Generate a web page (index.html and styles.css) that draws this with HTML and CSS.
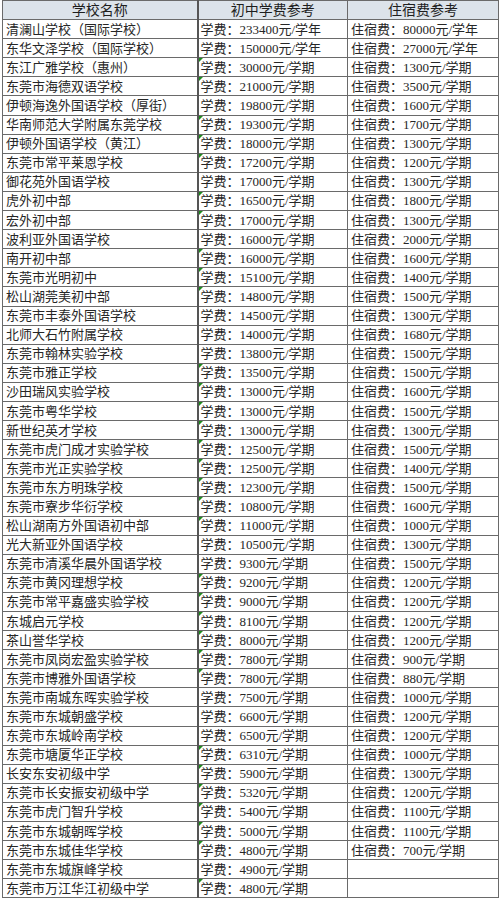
FILE: index.html
```html
<!DOCTYPE html>
<html lang="zh-CN">
<head>
<meta charset="utf-8">
<title>学校学费参考</title>
<link rel="stylesheet" href="styles.css">
</head>
<body>
<table class="fees">
<colgroup><col class="c1"><col class="c2"><col class="c3"></colgroup>
<thead>
<tr><th>学校名称</th><th>初中学费参考</th><th>住宿费参考</th></tr>
</thead>
<tbody>
<tr><td>清澜山学校（国际学校）</td><td>学费：233400元/学年</td><td>住宿费：80000元/学年</td></tr>
<tr><td>东华文泽学校（国际学校）</td><td>学费：150000元/学年</td><td>住宿费：27000元/学年</td></tr>
<tr><td>东江广雅学校（惠州）</td><td class="flag">学费：30000元/学期</td><td>住宿费：1300元/学期</td></tr>
<tr><td>东莞市海德双语学校</td><td class="flag">学费：21000元/学期</td><td>住宿费：3500元/学期</td></tr>
<tr><td>伊顿海逸外国语学校（厚街）</td><td>学费：19800元/学期</td><td>住宿费：1600元/学期</td></tr>
<tr><td>华南师范大学附属东莞学校</td><td class="flag">学费：19300元/学期</td><td>住宿费：1700元/学期</td></tr>
<tr><td>伊顿外国语学校（黄江）</td><td class="flag">学费：18000元/学期</td><td>住宿费：1300元/学期</td></tr>
<tr><td>东莞市常平莱恩学校</td><td class="flag">学费：17200元/学期</td><td>住宿费：1200元/学期</td></tr>
<tr><td>御花苑外国语学校</td><td>学费：17000元/学期</td><td>住宿费：1300元/学期</td></tr>
<tr><td>虎外初中部</td><td class="flag">学费：16500元/学期</td><td>住宿费：1800元/学期</td></tr>
<tr><td>宏外初中部</td><td class="flag">学费：17000元/学期</td><td>住宿费：1300元/学期</td></tr>
<tr><td>波利亚外国语学校</td><td>学费：16000元/学期</td><td>住宿费：2000元/学期</td></tr>
<tr><td>南开初中部</td><td class="flag">学费：16000元/学期</td><td>住宿费：1600元/学期</td></tr>
<tr><td>东莞市光明初中</td><td class="flag">学费：15100元/学期</td><td>住宿费：1400元/学期</td></tr>
<tr><td>松山湖莞美初中部</td><td class="flag">学费：14800元/学期</td><td>住宿费：1500元/学期</td></tr>
<tr><td>东莞市丰泰外国语学校</td><td>学费：14500元/学期</td><td>住宿费：1300元/学期</td></tr>
<tr><td>北师大石竹附属学校</td><td>学费：14000元/学期</td><td>住宿费：1680元/学期</td></tr>
<tr><td>东莞市翰林实验学校</td><td>学费：13800元/学期</td><td>住宿费：1500元/学期</td></tr>
<tr><td>东莞市雅正学校</td><td class="flag">学费：13500元/学期</td><td>住宿费：1500元/学期</td></tr>
<tr><td>沙田瑞风实验学校</td><td class="flag">学费：13000元/学期</td><td>住宿费：1600元/学期</td></tr>
<tr><td>东莞市粤华学校</td><td class="flag">学费：13000元/学期</td><td>住宿费：1500元/学期</td></tr>
<tr><td>新世纪英才学校</td><td class="flag">学费：13000元/学期</td><td>住宿费：1300元/学期</td></tr>
<tr><td>东莞市虎门成才实验学校</td><td class="flag">学费：12500元/学期</td><td>住宿费：1500元/学期</td></tr>
<tr><td>东莞市光正实验学校</td><td class="flag">学费：12500元/学期</td><td>住宿费：1400元/学期</td></tr>
<tr><td>东莞市东方明珠学校</td><td class="flag">学费：12300元/学期</td><td>住宿费：1500元/学期</td></tr>
<tr><td>东莞市寮步华衍学校</td><td class="flag">学费：10800元/学期</td><td>住宿费：1600元/学期</td></tr>
<tr><td>松山湖南方外国语初中部</td><td class="flag">学费：11000元/学期</td><td>住宿费：1000元/学期</td></tr>
<tr><td>光大新亚外国语学校</td><td>学费：10500元/学期</td><td>住宿费：1300元/学期</td></tr>
<tr><td>东莞市清溪华晨外国语学校</td><td>学费：9300元/学期</td><td>住宿费：1500元/学期</td></tr>
<tr><td>东莞市黄冈理想学校</td><td class="flag">学费：9200元/学期</td><td>住宿费：1200元/学期</td></tr>
<tr><td>东莞市常平嘉盛实验学校</td><td class="flag">学费：9000元/学期</td><td>住宿费：1200元/学期</td></tr>
<tr><td>东城启元学校</td><td class="flag">学费：8100元/学期</td><td>住宿费：1200元/学期</td></tr>
<tr><td>茶山誉华学校</td><td class="flag">学费：8000元/学期</td><td>住宿费：1200元/学期</td></tr>
<tr><td>东莞市凤岗宏盈实验学校</td><td class="flag">学费：7800元/学期</td><td>住宿费：900元/学期</td></tr>
<tr><td>东莞市博雅外国语学校</td><td class="flag">学费：7800元/学期</td><td>住宿费：880元/学期</td></tr>
<tr><td>东莞市南城东晖实验学校</td><td>学费：7500元/学期</td><td>住宿费：1000元/学期</td></tr>
<tr><td>东莞市东城朝盛学校</td><td>学费：6600元/学期</td><td>住宿费：1200元/学期</td></tr>
<tr><td>东莞市东城岭南学校</td><td>学费：6500元/学期</td><td>住宿费：1200元/学期</td></tr>
<tr><td>东莞市塘厦华正学校</td><td class="flag">学费：6310元/学期</td><td>住宿费：1000元/学期</td></tr>
<tr><td>长安东安初级中学</td><td class="flag">学费：5900元/学期</td><td>住宿费：1300元/学期</td></tr>
<tr><td>东莞市长安振安初级中学</td><td class="flag">学费：5320元/学期</td><td>住宿费：1200元/学期</td></tr>
<tr><td>东莞市虎门智升学校</td><td class="flag">学费：5400元/学期</td><td>住宿费：1100元/学期</td></tr>
<tr><td>东莞市东城朝晖学校</td><td class="flag">学费：5000元/学期</td><td>住宿费：1100元/学期</td></tr>
<tr><td>东莞市东城佳华学校</td><td class="flag">学费：4800元/学期</td><td>住宿费：700元/学期</td></tr>
<tr><td>东莞市东城旗峰学校</td><td>学费：4900元/学期</td><td></td></tr>
<tr><td>东莞市万江华江初级中学</td><td class="flag">学费：4800元/学期</td><td></td></tr>
</tbody>
</table>
</body>
</html>
```
FILE: styles.css
```css
html, body {
  margin: 0;
  padding: 0;
  background: #ffffff;
}
body {
  padding-left: 2px;
}
.fees {
  border-collapse: collapse;
  table-layout: fixed;
  width: 496px;
  font-family: "Liberation Serif", "Noto Sans CJK SC", serif;
  font-size: 13px;
  color: #262626;
}
.c1 { width: 195px; }
.c2 { width: 150px; }
.c3 { width: 151px; }
.fees tr {
  height: 19.1px;
}
.fees th,
.fees td {
  border: 1px solid #6a6a6a;
  padding: 0 0 0 3px;
  line-height: 17px;
  white-space: nowrap;
  overflow: hidden;
  vertical-align: middle;
  text-align: left;
  font-weight: 400;
}
.fees th {
  background: #dce3ea;
  text-align: center;
  padding: 0;
  font-size: 14px;
  color: #1e1e1e;
}
.fees td:nth-child(2),
.fees th:nth-child(2) {
  border-left: 2px solid #555555;
  padding-left: 2px;
}
.fees th:nth-child(2) { padding-left: 0; }
.fees td:nth-child(3) {
  padding-left: 3px;
}
.flag {
  position: relative;
}
.flag::before {
  content: "";
  position: absolute;
  left: 0;
  top: 0;
  width: 0;
  height: 0;
  border-top: 4px solid #1e8a1e;
  border-right: 4px solid transparent;
}
```
